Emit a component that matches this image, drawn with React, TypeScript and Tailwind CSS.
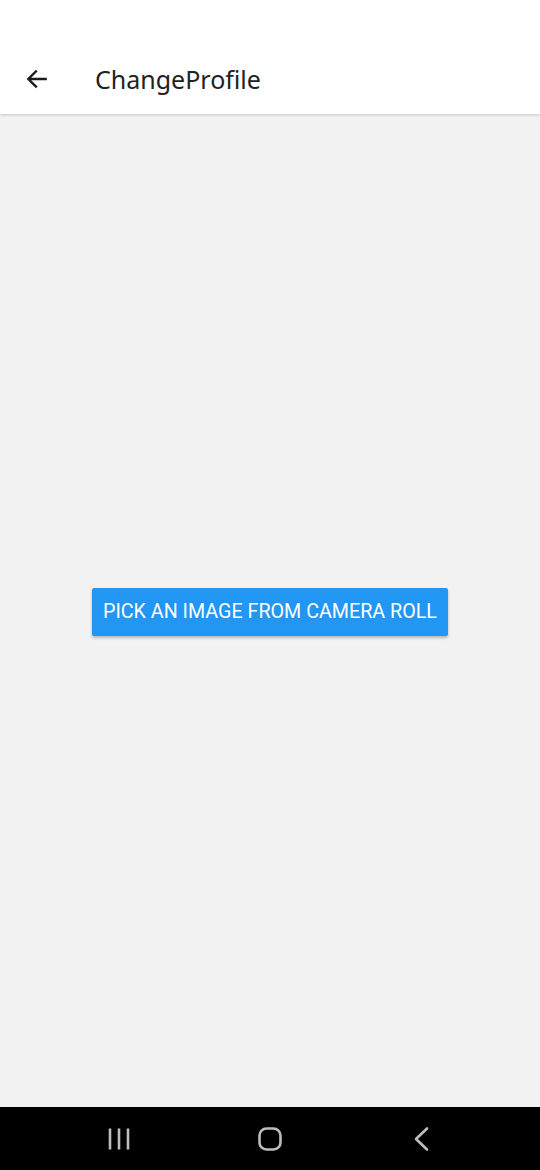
export default function App() {
  return (
    <div className="flex h-[1170px] w-[540px] flex-col bg-[#f2f2f2]" style={{ fontFamily: '"Noto Sans", Roboto, sans-serif' }}>
      <div className="relative z-10 flex h-[114px] shrink-0 items-end bg-white pb-[15px] shadow-[0_1px_3px_rgba(0,0,0,0.18)]">
        <div className="flex h-[40px] w-[95px] items-center pl-[24px]">
          <svg width="26" height="26" viewBox="0 0 24 24" fill="none" stroke="#1c1c1c" strokeWidth="2.2" strokeLinecap="square">
            <path d="M20 12H4.5M11 5l-7 7 7 7" />
          </svg>
        </div>
        <div className="text-[25px] leading-[40px] text-[#222]">ChangeProfile</div>
      </div>
      <div className="flex flex-1 items-center justify-center pt-[2px]">
        <button className="h-[48px] w-[356px] rounded-[2px] bg-[#2196f3] text-[19.7px] text-white shadow-[0_2px_3px_rgba(0,0,0,0.25)]" style={{ fontFamily: 'Roboto, "Noto Sans", sans-serif' }}>
          PICK AN IMAGE FROM CAMERA ROLL
        </button>
      </div>
      <div className="flex h-[63px] shrink-0 items-center justify-center gap-[125px] bg-black">
        <svg width="26" height="26" viewBox="0 0 26 26" fill="none" stroke="#bdbdbd" strokeWidth="2.6">
          <path d="M4 2.5v21M13 2.5v21M22 2.5v21" />
        </svg>
        <svg width="26" height="26" viewBox="0 0 26 26" fill="none" stroke="#bdbdbd" strokeWidth="2.6">
          <rect x="2.5" y="2.5" width="21" height="21" rx="7" />
        </svg>
        <svg width="26" height="26" viewBox="0 0 26 26" fill="none" stroke="#bdbdbd" strokeWidth="2.6" strokeLinecap="round" strokeLinejoin="round">
          <path d="M19 2.5L8 13l11 10.5" />
        </svg>
      </div>
    </div>
  );
}
